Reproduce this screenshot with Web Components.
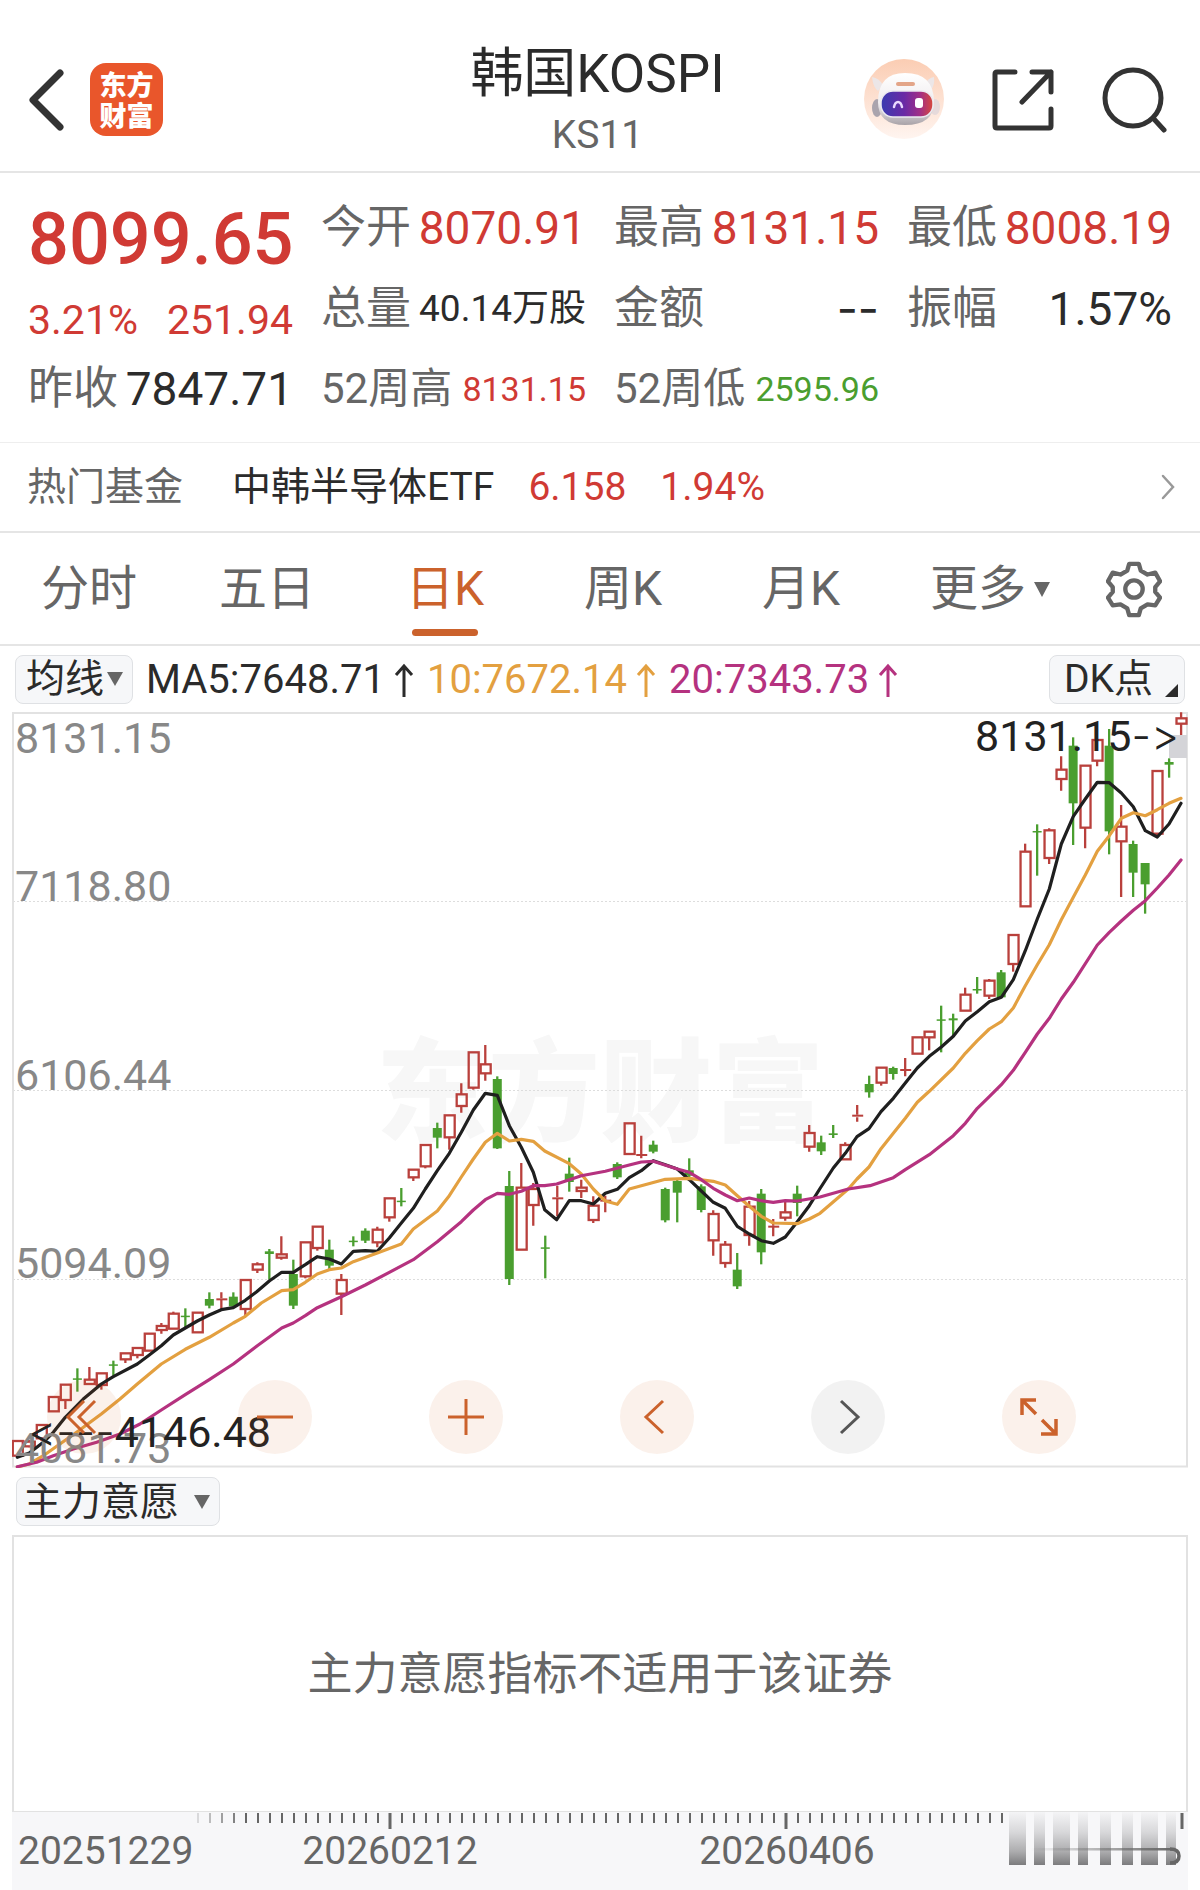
<!DOCTYPE html>
<html lang="zh-CN">
<head>
<meta charset="utf-8">
<meta name="viewport" content="width=device-width, initial-scale=1">
<title>韩国KOSPI KS11</title>
<style>
html {
    --red: #d03a34;
    --green: #4a9e2f;
    --accent: #cb622c;
    --ink: #2b2b2b;
    --muted: #666;
    --line: #e5e5e5;
    --chip: #f6f7f9;
}
body {
    margin: 0;
    background: #fff;
    color: var(--ink);
    font-family: Roboto, "Noto Sans CJK SC", sans-serif;
    font-size: 45px;
}
</style>
</head>
<body>
<stock-page></stock-page>

<script>
class BaseElement extends HTMLElement {

    constructor() {
        super();
        this.attachShadow({mode: 'open'});
        const template = document.createElement('template');
        template.innerHTML = this.template();
        this.shadowRoot.appendChild(template.content.cloneNode(true));
    }

    template() {
        return '<slot></slot>';
    }
}

/* ---------- header ---------- */

class AppHeader extends BaseElement {

    template() {
        return `
<style>
:host {
    display: grid;
    grid-template-columns: 1fr auto 1fr;
    align-items: center;
    height: 143px;
    padding: 28px 33px 0 28px;
    border-bottom: 2px solid var(--line);
}
button {
    display: block;
    padding: 0;
    border: 0;
    background: none;
    cursor: pointer;
}
svg { display: block; }
.left, .right { display: flex; align-items: center; }
.left { gap: 26px; }
.right { justify-content: flex-end; }
.right button + button { margin-left: 47px; }
.logo {
    width: 73px;
    height: 73px;
    box-sizing: border-box;
    padding-top: 5px;
    border-radius: 16px;
    background: #e9562b;
    color: #fff;
    font: 900 27px/31px "Noto Sans CJK SC", sans-serif;
    text-align: center;
    text-decoration: none;
}
.logo span { display: block; }
.title { padding-top: 8px; text-align: center; }
h1 { margin: 0; font-size: 53px; line-height: 62px; font-weight: 400; }
p { margin: 0; font-size: 39px; line-height: 60px; color: var(--muted); }
</style>
<div class="left">
    <button aria-label="返回">
        <svg width="36" height="62" viewBox="0 0 36 62" fill="none" stroke="#333" stroke-width="7" stroke-linecap="round" stroke-linejoin="round"><path d="M32 4 5 31l27 27"/></svg>
    </button>
    <a class="logo" href="#"><span>东方</span><span>财富</span></a>
</div>
<div class="title">
    <h1>韩国KOSPI</h1>
    <p>KS11</p>
</div>
<div class="right">
    <button aria-label="助手">
        <svg width="81" height="81" viewBox="0 0 81 81">
            <defs>
                <linearGradient id="disc" x1="0" y1="0" x2="0" y2="1"><stop offset="0" stop-color="#fbcdb3"/><stop offset="1" stop-color="#fff5f0"/></linearGradient>
                <linearGradient id="head" x1="0" y1="0" x2="0" y2="1"><stop offset="0" stop-color="#fff"/><stop offset=".6" stop-color="#efecee"/><stop offset="1" stop-color="#a9a3a8"/></linearGradient>
                <linearGradient id="visor" x1="0" y1="0" x2="1" y2="0"><stop offset="0" stop-color="#3a3bb0"/><stop offset=".45" stop-color="#6a2aa5"/><stop offset=".75" stop-color="#a12f86"/><stop offset="1" stop-color="#d8493c"/></linearGradient>
            </defs>
            <circle cx="40" cy="40" r="40" fill="url(#disc)"/>
            <path d="M8 18q7 1 11 8l-5 6q-5-4-6-14zM70 18q-6 1-9 7l6 6q4-5 3-13z" fill="#ece6e7"/>
            <ellipse cx="13" cy="49" rx="5" ry="9" fill="#aaa4ad"/>
            <ellipse cx="71" cy="48" rx="5" ry="8" fill="#e6dadb"/>
            <path d="M14 43q0-29 27-29 29 0 29 29 0 23-29 23-27 0-27-23z" fill="url(#head)"/>
            <rect x="32" y="23" width="19" height="4" rx="2" fill="#e3a588"/>
            <rect x="17" y="32" width="52" height="26" rx="12" fill="url(#visor)" stroke="#eceaf0" stroke-width="1.500"/>
            <path d="M30 48q1-5 4-5t4 5" fill="none" stroke="#e9d9ff" stroke-width="2.500" stroke-linecap="round"/>
            <rect x="51" y="39" width="8" height="10" rx="3" fill="#fff"/>
        </svg>
    </button>
    <button aria-label="分享">
        <svg width="62" height="62" viewBox="0 0 62 62" fill="none" stroke="#333" stroke-width="5" stroke-linecap="round" stroke-linejoin="round"><path d="M23 3H5q-2 0-2 2v52q0 2 2 2h52q2 0 2-2V40M40 3h19v20M59 3 30 33"/></svg>
    </button>
    <button aria-label="搜索">
        <svg width="66" height="66" viewBox="0 0 66 66" fill="none" stroke="#333" stroke-width="5" stroke-linecap="round"><circle cx="32" cy="31" r="28"/><path d="m52 51 11 12"/></svg>
    </button>
</div>`;
    }
}

/* ---------- quote block ---------- */

class QuoteItem extends BaseElement {

    static get observedAttributes() {
        return ['label', 'tone'];
    }

    attributeChangedCallback(name, oldValue, newValue) {
        switch (name) {
            case 'label':
                this.shadowRoot.querySelector('.label').textContent = newValue;
                break;
            case 'tone':
                this.shadowRoot.querySelector('.value').style.color = `var(--${newValue})`;
                break;
        }
    }

    template() {
        return `
<style>
:host {
    display: flex;
    align-items: center;
    justify-content: space-between;
    line-height: 80px;
    white-space: nowrap;
}
.value { font-size: 46px; }
:host([size="medium"]) .value { font-size: 37px; }
:host([size="small"]) .label { font-size: 42px; }
:host([size="small"]) .value { font-size: 34px; }
.label { color: var(--muted); }
</style>
<span class="label"></span>
<span class="value"><slot></slot></span>`;
    }
}

class StockQuote extends BaseElement {

    template() {
        return `
<style>
:host {
    display: grid;
    grid-template-columns: repeat(4, minmax(0, 1fr));
    column-gap: 28px;
    padding: 15px 28px 13px;
    border-bottom: 1px solid #eee;
}
.last { grid-row: span 2; color: var(--red); }
.price { font-size: 72px; line-height: 104px; font-weight: 500; }
.change { display: flex; justify-content: space-between; font-size: 41px; line-height: 56px; }
.dash { font-family: Inter, sans-serif; }
</style>
<div class="last">
    <div class="price">8099.65</div>
    <div class="change"><span>3.21%</span><span>251.94</span></div>
</div>
<quote-item label="今开" tone="red">8070.91</quote-item>
<quote-item label="最高" tone="red">8131.15</quote-item>
<quote-item label="最低" tone="red">8008.19</quote-item>
<quote-item label="总量" size="medium">40.14万股</quote-item>
<quote-item label="金额"><span class="dash">--</span></quote-item>
<quote-item label="振幅">1.57%</quote-item>
<quote-item label="昨收">7847.71</quote-item>
<quote-item label="52周高" size="small" tone="red">8131.15</quote-item>
<quote-item label="52周低" size="small" tone="green">2595.96</quote-item>`;
    }
}

class HotFund extends BaseElement {

    template() {
        return `
<style>
:host { display: block; border-bottom: 2px solid var(--line); }
a {
    display: flex;
    align-items: center;
    gap: 34px;
    padding: 0 24px 0 27px;
    font-size: 39px;
    line-height: 88px;
    color: var(--ink);
    text-decoration: none;
}
.label { margin-right: 15px; color: var(--muted); }
.up { color: var(--red); }
svg { margin-left: auto; }
</style>
<a href="#">
    <span class="label">热门基金</span>
    <span>中韩半导体ETF</span>
    <span class="up">6.158</span>
    <span class="up">1.94%</span>
    <svg width="16" height="28" viewBox="0 0 16 28" fill="none" stroke="#999" stroke-width="2.500" stroke-linecap="round"><path d="m3 3 10 11L3 25"/></svg>
</a>`;
    }
}

/* ---------- period tabs ---------- */

class PeriodTab extends BaseElement {

    template() {
        return `
<style>
:host { display: block; }
button {
    display: flex;
    flex-direction: column;
    align-items: center;
    width: 100%;
    padding: 16px 0 8px;
    border: 0;
    background: none;
    color: var(--muted);
    font: inherit;
    font-size: 48px;
    line-height: 80px;
    cursor: pointer;
}
.text { display: flex; align-items: center; gap: 8px; }
.bar { width: 66px; height: 7px; border-radius: 4px; }
svg { display: none; }
:host([active]) button { color: var(--accent); }
:host([active]) .bar { background: var(--accent); }
:host([menu]) button { padding-left: 22px; }
:host([menu]) svg { display: block; }
</style>
<button role="tab">
    <span class="text"><slot></slot><svg width="16" height="15" viewBox="0 0 16 15" fill="#666"><path d="M0 0h16L8 15z"/></svg></span>
    <span class="bar"></span>
</button>`;
    }
}

class PeriodTabs extends BaseElement {

    template() {
        return `
<style>
:host {
    display: grid;
    grid-template-columns: repeat(6, 1fr) 11%;
    align-items: center;
    border-bottom: 2px solid var(--line);
}
.gear { justify-self: center; padding: 0; border: 0; background: none; cursor: pointer; }
.gear svg { display: block; }
</style>
<period-tab>分时</period-tab>
<period-tab>五日</period-tab>
<period-tab active>日K</period-tab>
<period-tab>周K</period-tab>
<period-tab>月K</period-tab>
<period-tab menu>更多</period-tab>
<button class="gear" aria-label="设置">
    <svg width="56" height="58" viewBox="0 0 58 58" fill="none" stroke="#666" stroke-width="4.500" stroke-linejoin="round">
        <path d="M24 3h10l2 7 7 4 8-2 5 9-5 6v5l5 6-5 8-8-1-7 4-2 7H24l-2-7-7-4-8 1-5-8 5-6v-5l-5-6 5-9 8 2 7-4z"/>
        <circle cx="29" cy="29" r="9"/>
    </svg>
</button>`;
    }
}

/* ---------- drop-down chip ---------- */

class ChipSelect extends BaseElement {

    static get observedAttributes() {
        return ['value', 'title'];
    }

    attributeChangedCallback(name, oldValue, newValue) {
        switch (name) {
            case 'value':
                this.shadowRoot.querySelector('option').textContent = newValue;
                break;
            case 'title':
                this.shadowRoot.querySelector('select').setAttribute('aria-label', newValue);
                break;
        }
    }

    template() {
        return `
<style>
:host {
    display: inline-flex;
    align-items: center;
    height: 47px;
    gap: 2px;
    padding: 0 9px 0 10px;
    border: 1px solid #dfe1e4;
    border-radius: 8px;
    background: var(--chip);
}
:host([wide]) { gap: 14px; padding: 0 9px 0 6px; }
:host([corner]) { gap: 11px; padding: 0 6px 0 14px; }
select {
    appearance: none;
    height: 47px;
    padding: 0;
    border: 0;
    background: none;
    color: var(--ink);
    font: inherit;
    font-size: 39px;
}
svg { flex: none; }
.fold { display: none; align-self: flex-end; margin-bottom: 6px; }
:host([corner]) .fold { display: block; }
:host([corner]) .arrow { display: none; }
</style>
<select><option></option></select>
<svg class="arrow" width="16" height="14" viewBox="0 0 16 14" fill="#666"><path d="M0 0h16L8 14z"/></svg>
<svg class="fold" width="13" height="13" viewBox="0 0 13 13" fill="#2b2b2b"><path d="M13 0v13H0z"/></svg>`;
    }
}

class MaLegend extends BaseElement {

    template() {
        return `
<style>
:host {
    display: flex;
    align-items: center;
    height: 66px;
    padding: 0 3px;
    font-size: 40px;
    white-space: nowrap;
}
.ma { margin-left: 13px; }
.ma svg { margin-left: 9px; vertical-align: -4px; }
.ma10 { color: #e3a040; }
.ma20 { color: #b5327f; }
chip-select[corner] { margin-left: auto; }
</style>
<chip-select value="均线" title="主图指标"></chip-select>
<span class="ma">MA5:7648.71<svg width="20" height="34" viewBox="0 0 20 34" fill="none" stroke="currentColor" stroke-width="3"><path d="M10 34V3M2 12l8-9 8 9"/></svg></span>
<span class="ma ma10">10:7672.14<svg width="20" height="34" viewBox="0 0 20 34" fill="none" stroke="currentColor" stroke-width="3"><path d="M10 34V3M2 12l8-9 8 9"/></svg></span>
<span class="ma ma20">20:7343.73<svg width="20" height="34" viewBox="0 0 20 34" fill="none" stroke="currentColor" stroke-width="3"><path d="M10 34V3M2 12l8-9 8 9"/></svg></span>
<chip-select corner value="DK点" title="DK点"></chip-select>`;
    }
}

/* ---------- candlestick chart ---------- */

// each block has its own origin, values are thirds of a chart unit
// candle: kind (r = up, g = down), high, body top, body bottom, low
const CANDLES = [
    {first: 0, y: 1000, rows: `
r 1326 1326 1370 1370|r 1322 1328 1342 1345|r 1278 1278 1318 1325|r 1194 1194 1237 1237|r 1157 1157 1203 1230
g 1108 1138 1141 1178|r 1104 1142 1155 1157|r 1123 1123 1158 1172|g 1085 1096 1100 1130|r 1063 1063 1081 1092
r 1047 1047 1068 1078|r 1004 1004 1055 1055|r 972 981 993 1004|r 938 944 989 989|g 928 950 953 988
r 941 941 1000 1000|g 880 900 920 928|r 880 898 902 930|g 880 893 922 926|r 843 843 930 952
r 790 796 812 822|g 750 757 765 842|r 712 766 776 782|g 782 825 920 930|r 730 730 832 838
r 683 683 747 755|g 722 752 800 812|r 825 843 884 948|g 712 725 728 742|g 688 695 725 732
r 683 692 730 745|r 598 598 655 668|g 567 605 608 622|r 512 512 535 546|r 438 438 502 508
g 371 387 416 448|r 349 349 415 452|r 253 286 321 341|r 160 160 266 272|r 138 196 223 245
g 232 240 448 450|g 516 561 840 858|r 492 566 752 752|r 552 570 618 680|g 710 745 749 838
r 560 595 600 652|g 476 524 549 578|r 542 566 576 597|r 592 620 663 672|r 590 602 606 640
g 490 495 535 540|r 373 373 465 465|r 410 465 468 478|g 425 437 458 463|g 566 570 664 670
g 538 546 581 670|g 478 514 530 540|g 556 562 633 640|r 634 645 724 770|r 726 737 792 806
g 762 812 862 870|r 606 623 708 740|g 570 584 760 796|r 660 680 684 712|r 608 640 656 665
g 560 584 612 652`},
    {first: 66, y: 690, rows: `
r 1308 1332 1373 1388|g 1340 1360 1387 1398|g 1308 1333 1338 1347|r 1360 1368 1411 1412|r 1248 1277 1285 1298
g 1160 1185 1210 1226|r 1136 1136 1181 1190|g 1133 1137 1155 1172|r 1107 1140 1144 1162|r 1045 1045 1094 1094
r 1028 1028 1045 1084|g 950 991 994 1090|g 974 988 994 1040|r 896 917 965 965|g 864 900 904 914
r 870 875 920 930|g 843 850 925 925|r 738 738 825 848|r 464 488 652 652|g 406 426 429 560
r 418 424 507 525|r 202 242 270 305|g 145 170 343 468|r 228 230 416 478|r 150 153 215 232
g 120 170 427 496|r 348 413 457 624|g 455 465 551 624|g 522 522 586 674|r 246 246 434 440
g 208 219 227 266|r 70 88 104 138`}
];

const BLOCKS = [[0, 1000], [400, 1000], [780, 690]];

const LINES = [
    {color: '#1f1f1f', blocks: [
        '52,1375 88,1362 130,1330 160,1300 196,1255 250,1200 304,1155 340,1133 412,1095 448,1068 484,1040 520,1008 556,987 592,966 628,948 664,932 700,926 736,904 770,878 808,846 845,820 880,820 916,797 952,773 988,780 1024,795 1060,757 1096,755 1132,757 1168,717 1204,672',
        '40,628 76,570 112,515 148,463 184,400 220,333 256,283 292,289 328,380 364,445 400,520 434,632 470,662 508,605 544,605 580,615 616,583 652,571 688,536 724,515 760,485 796,497 832,510 868,542 904,576 940,610 976,628 1012,682 1048,705 1084,725 1120,733 1156,714 1192,668 1228,620',
        '119,1500 160,1437 196,1393 231,1343 267,1319 303,1268 340,1228 376,1182 412,1137 448,1102 484,1074 520,1042 556,996 592,968 628,938 664,925 700,872 736,785 772,690 808,600 844,465 880,382 916,330 952,280 988,281 1024,312 1060,353 1096,425 1132,444 1167,405 1203,343']},
    {color: '#e3a040', blocks: [
        '52,1404 88,1395 130,1370 170,1342 232,1298 304,1245 360,1200 412,1155 484,1095 556,1051 628,1015 700,972 736,952 784,912 845,875 880,872 916,850 952,825 988,812 1024,807 1060,788 1132,762 1204,735',
        '40,690 76,663 112,636 148,590 184,534 220,480 256,430 292,403 328,426 364,421 400,427 434,456 508,494 544,525 580,570 616,606 652,616 688,570 724,560 796,541 868,538 940,547 976,558 1012,590 1048,622 1084,652 1120,672 1192,674 1228,660 1260,643',
        '205,1500 231,1470 267,1434 303,1379 340,1333 376,1288 412,1240 448,1207 520,1137 556,1093 592,1055 628,1020 664,998 700,957 736,890 772,827 808,767 844,692 880,625 916,558 952,487 988,440 1024,388 1060,371 1096,380 1132,362 1167,343 1203,328']},
    {color: '#b5327f', blocks: [
        '52,1403 110,1390 160,1370 220,1350 290,1330 360,1305 420,1275 484,1233 556,1187 628,1142 700,1095 772,1040 845,987 880,972 916,950 952,926 1024,893 1096,858 1168,820',
        '40,782 112,728 184,668 220,633 256,602 292,583 328,586 364,577 400,560 434,560 470,555 544,530 616,517 688,498 724,489 760,487 832,510 868,520 904,542 940,568 976,588 1012,605 1048,597 1084,605 1120,610 1156,605 1192,606 1260,594',
        '205,1500 270,1490 340,1466 376,1442 448,1397 520,1340 556,1303 592,1258 628,1223 664,1187 700,1144 736,1090 772,1035 808,988 844,930 880,880 952,768 988,730 1024,696 1060,664 1096,635 1132,597 1167,558 1203,513']}
];

function drawCandles() {
    let out = '';
    for (const block of CANDLES) {
        block.rows.trim().split(/[|\n]/).forEach((row, n) => {
            const [kind, ...raw] = row.split(' ');
            const [high, top, bottom, low] = raw.map(v => block.y + v / 3);
            const x = 17.4 + (block.first + n) * 11.997;
            const h = bottom - top;
            if (kind === 'g') {
                out += `<path d="M${x} ${high}V${low}" stroke="#4a9e2f" stroke-width="2.3"/>`;
                out += `<rect x="${x - 4.5}" y="${top}" width="9" height="${Math.max(h, 1.5)}" fill="#4a9e2f"/>`;
            } else {
                out += `<path d="M${x} ${high}V${top}M${x} ${bottom}V${low}" stroke="#b9403c" stroke-width="2.3"/>`;
                out += h < 3
                    ? `<rect x="${x - 5}" y="${top}" width="11" height="2" fill="#b9403c"/>`
                    : `<rect x="${x - 4.6}" y="${top}" width="10" height="${h}" fill="none" stroke="#b9403c" stroke-width="2.3"/>`;
            }
        });
    }
    return out;
}

function drawLines() {
    return LINES.map(line => {
        const points = line.blocks.map((block, n) => block.split(' ').map(p => {
            const [x, y] = p.split(',');
            return `${(BLOCKS[n][0] + x / 3).toFixed(1)},${(BLOCKS[n][1] + y / 3).toFixed(1)}`;
        }).join(' ')).join(' ');
        return `<polyline points="${points}" fill="none" stroke="${line.color}" stroke-width="3.2" stroke-linejoin="round" stroke-linecap="round"/>`;
    }).join('');
}

class RoundButton extends BaseElement {

    template() {
        return `
<style>
:host { display: block; color: var(--accent); --disc: rgba(215, 95, 30, .09); }
:host([off]) { color: #555; --disc: rgba(0, 0, 0, .05); }
button {
    display: block;
    width: 74px;
    height: 74px;
    padding: 17px;
    border: 0;
    border-radius: 50%;
    background: var(--disc);
    color: inherit;
    cursor: pointer;
}
</style>
<button><slot></slot></button>`;
    }
}

class KlineChart extends BaseElement {

    template() {
        return `
<style>
:host { display: block; position: relative; }
.plot { display: block; width: 100%; }
.tools {
    position: absolute;
    left: 3%;
    right: 9.5%;
    bottom: 14px;
    display: flex;
    justify-content: space-between;
}
.tools svg { display: block; }
text { font-size: 43px; }
.axis { fill: #888; }
.mark { fill: #222; }
.mark tspan { font-family: Inter, sans-serif; font-weight: 300; font-feature-settings: "calt" 0; font-variant-ligatures: none; }
.watermark { font: 900 112px "Noto Sans CJK SC", sans-serif; fill: #f7f7f7; }
</style>
<svg class="plot" viewBox="12 713 1176 756">
    <text class="watermark" x="376" y="1134">东方财富</text>
    <path d="M13 902.500H1187M13 1091.500H1187M13 1280.500H1187" stroke="#ddd" stroke-dasharray="2 2"/>
    <rect x="13" y="714" width="1174" height="753.500" fill="none" stroke="#e2e2e2" stroke-width="2"/>
    <rect x="1169" y="736" width="18" height="23" fill="#d4d4d8"/>
    ${drawCandles()}
    ${drawLines()}
    <g class="axis">
        <text x="15" y="754">8131.15</text>
        <text x="15" y="902">7118.80</text>
        <text x="15" y="1091">6106.44</text>
        <text x="15" y="1279">5094.09</text>
        <text x="15" y="1464">4081.73</text>
    </g>
    <text class="mark" x="1179" y="752" text-anchor="end">8131.15<tspan>-&gt;</tspan></text>
    <text class="mark" x="271" y="1448" text-anchor="end"><tspan>&lt;---</tspan>4146.48</text>
</svg>
<div class="tools">
    <round-button><svg width="40" height="40" viewBox="0 0 40 40" fill="none" stroke="currentColor" stroke-width="3"><path d="M20 4 4 20l16 16M31 4 15 20l16 16"/></svg></round-button>
    <round-button><svg width="40" height="40" viewBox="0 0 40 40" fill="none" stroke="currentColor" stroke-width="3"><path d="M2 20h36"/></svg></round-button>
    <round-button><svg width="40" height="40" viewBox="0 0 40 40" fill="none" stroke="currentColor" stroke-width="3"><path d="M2 20h36M20 2v36"/></svg></round-button>
    <round-button><svg width="40" height="40" viewBox="0 0 40 40" fill="none" stroke="currentColor" stroke-width="3"><path d="M26 4 9 20l17 16"/></svg></round-button>
    <round-button off><svg width="40" height="40" viewBox="0 0 40 40" fill="none" stroke="currentColor" stroke-width="3"><path d="m13 4 17 16-17 16"/></svg></round-button>
    <round-button><svg width="40" height="40" viewBox="0 0 40 40" fill="none" stroke="currentColor" stroke-width="3.500"><path d="M17 3H3v15M3 3l14 14M37 22v15H22M37 37 23 23"/></svg></round-button>
</div>`;
    }
}

/* ---------- indicator panel and date axis ---------- */

class IndicatorPanel extends BaseElement {

    template() {
        return `
<style>
:host { display: flex; flex-direction: column; }
.head { display: flex; align-items: center; height: 67px; padding: 0 4px; }
.body {
    flex: 1;
    display: flex;
    align-items: center;
    justify-content: center;
    min-height: 220px;
    padding-bottom: 8px;
    border: 2px solid #e2e2e2;
    border-bottom-width: 1px;
    color: var(--muted);
}
</style>
<div class="head"><chip-select wide value="主力意愿" title="副图指标"></chip-select></div>
<div class="body"><slot></slot></div>`;
    }
}

class DateAxis extends BaseElement {

    template() {
        let ticks = '';
        for (let x = 198; x < 1005; x += 12) {
            const faint = Math.min(1, (x - 186) / 60);
            if (x !== 390 && x !== 786) {
                ticks += `<path d="M${x} 1813v10" stroke="#666" stroke-width="2" opacity="${faint}"/>`;
            }
        }
        const bars = [[1009, 17], [1034, 11], [1053, 17], [1078, 10], [1100, 11], [1122, 11], [1141, 17], [1166, 10]]
            .map(([x, w]) => `<rect x="${x}" y="1810" width="${w}" height="55" fill="url(#fade)"/>`).join('');
        return `
<style>
:host { display: block; background: #f7f7f9; }
svg { display: block; width: 100%; }
text { font-size: 39px; fill: #666; }
</style>
<svg viewBox="12 1812 1176 78">
    <defs>
        <linearGradient id="fade" x1="0" y1="0" x2="0" y2="1"><stop offset="0" stop-color="#f7f7f9"/><stop offset=".4" stop-color="#d8d8da"/><stop offset=".75" stop-color="#adadaf"/><stop offset="1" stop-color="#7c7c7e"/></linearGradient>
        <linearGradient id="trail" gradientUnits="userSpaceOnUse" x1="1030" y1="0" x2="1175" y2="0"><stop offset="0" stop-color="#666" stop-opacity="0"/><stop offset="1" stop-color="#666"/></linearGradient>
    </defs>
    ${ticks}
    <path d="M390 1813v16M786 1813v16M1182 1813v16" stroke="#666" stroke-width="3"/>
    ${bars}
    <rect x="1030" y="1848" width="143" height="2.500" fill="url(#trail)"/>
    <path d="M1170 1849q9 0 9 7t-9 7" fill="none" stroke="#666" stroke-width="3.500"/>
    <text x="18" y="1864">20251229</text>
    <text x="390" y="1864" text-anchor="middle">20260212</text>
    <text x="787" y="1864" text-anchor="middle">20260406</text>
</svg>`;
    }
}

class StockPage extends BaseElement {

    template() {
        return `
<style>
:host { display: flex; flex-direction: column; min-height: 100vh; }
main { flex: 1; display: flex; flex-direction: column; padding: 0 12px; }
indicator-panel { flex: 1; }
</style>
<app-header></app-header>
<stock-quote></stock-quote>
<hot-fund></hot-fund>
<period-tabs role="tablist"></period-tabs>
<main>
    <ma-legend></ma-legend>
    <kline-chart></kline-chart>
    <indicator-panel>主力意愿指标不适用于该证券</indicator-panel>
    <date-axis></date-axis>
</main>`;
    }
}

window.customElements.define('app-header', AppHeader);
window.customElements.define('quote-item', QuoteItem);
window.customElements.define('stock-quote', StockQuote);
window.customElements.define('hot-fund', HotFund);
window.customElements.define('period-tab', PeriodTab);
window.customElements.define('period-tabs', PeriodTabs);
window.customElements.define('chip-select', ChipSelect);
window.customElements.define('ma-legend', MaLegend);
window.customElements.define('round-button', RoundButton);
window.customElements.define('kline-chart', KlineChart);
window.customElements.define('indicator-panel', IndicatorPanel);
window.customElements.define('date-axis', DateAxis);
window.customElements.define('stock-page', StockPage);
</script>
</body>
</html>
